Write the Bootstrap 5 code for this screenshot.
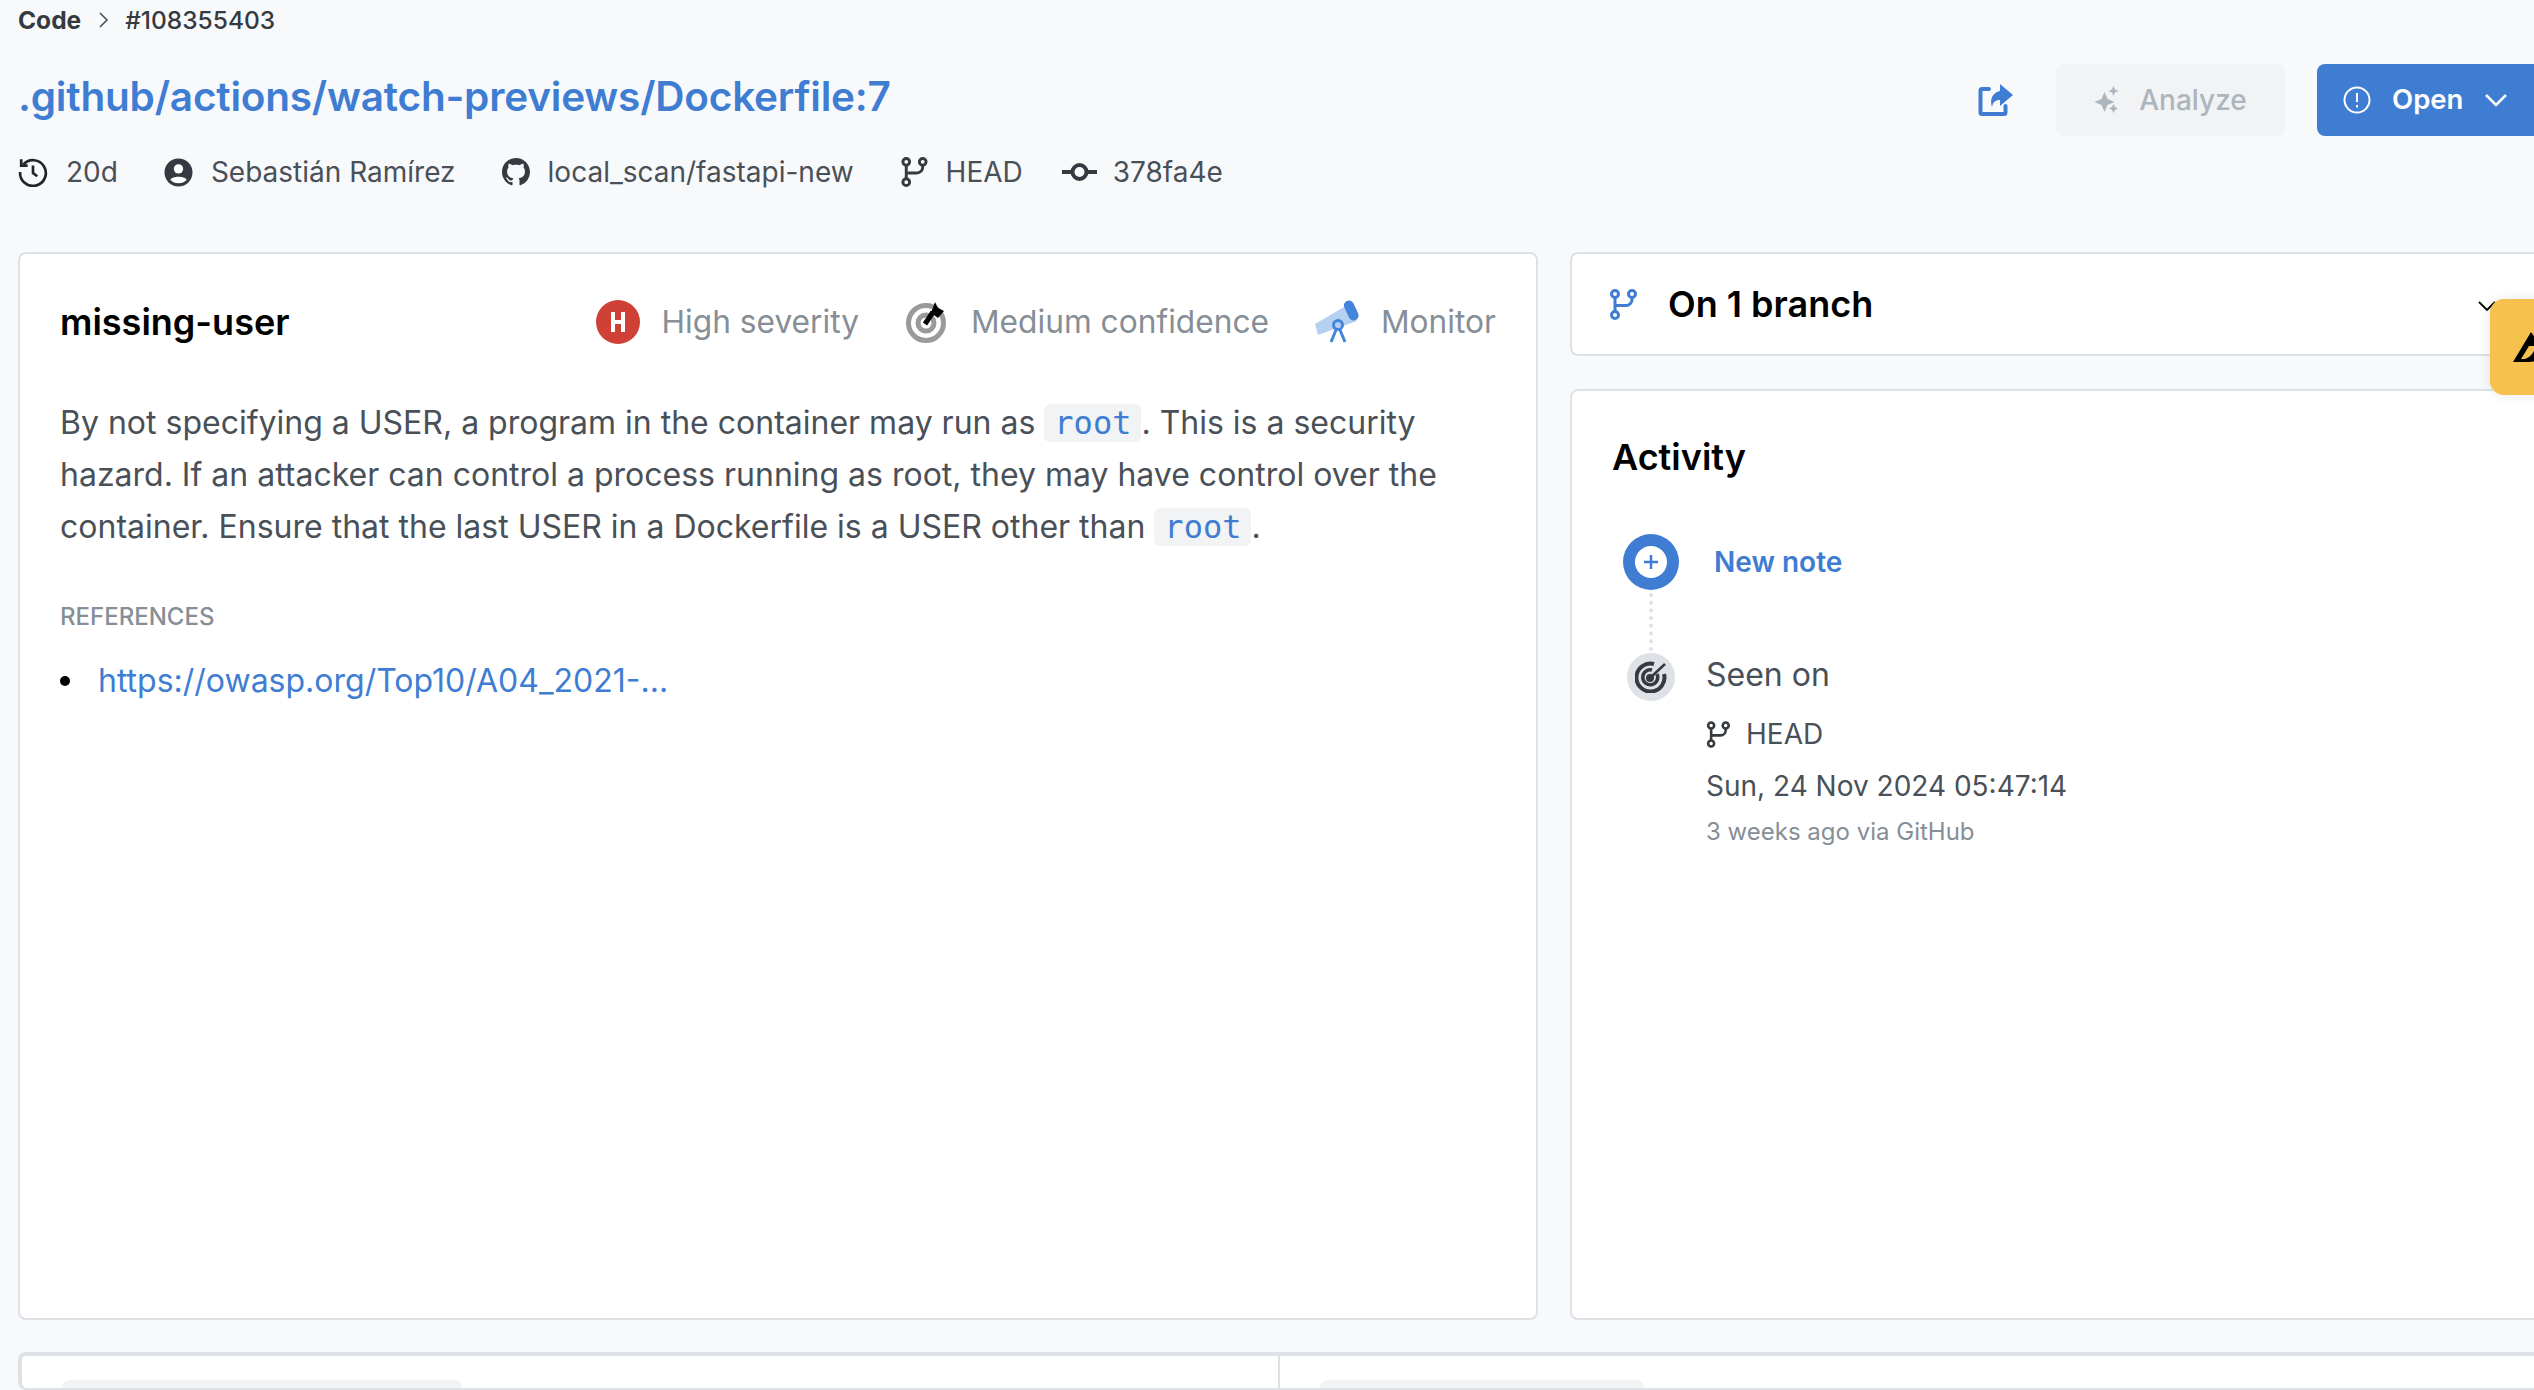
<!DOCTYPE html>
<html lang="en">
  <head>
    <meta charset="UTF-8" />
    <title>#108355403</title>
    <link href="https://cdn.jsdelivr.net/npm/bootstrap@5.3.0/dist/css/bootstrap.min.css" rel="stylesheet" />
    <style>
      html, body {
        height: 1390px;
        overflow: hidden;
      }
      body {
        background: #f8f9fb;
        font-family: Inter, "Liberation Sans", sans-serif;
        color: #495057;
        font-size: 28px;
        width: 2534px;
      }
      .page-wrap {
        width: 2560px;
        padding-left: 18px;
      }
      .crumbs {
        height: 40px;
        font-size: 24.500px;
        color: #343a40;
        font-weight: 500;
      }
      .crumbs b {
        font-weight: 700;
      }
      .crumb-sep {
        margin: 0 16px 0 18px;
      }
      .title-row {
        height: 72px;
        margin-top: 24px;
        width: 2531px;
      }
      .title-link {
        color: #3f7dd3;
        font-size: 40.500px;
        font-weight: 600;
        letter-spacing: -0.2px;
        text-decoration: none;
        margin-bottom: 6px;
      }
      .share-icon {
        margin-right: 43px;
      }
      .btn-analyze {
        width: 229px;
        height: 72px;
        background: #f1f3f5;
        color: #adb5bd;
        border: 0;
        border-radius: 8px;
        font-size: 28px;
        font-weight: 500;
        margin-right: 32px;
        gap: 20px;
      }
      .btn-open {
        width: 232px;
        height: 72px;
        background: #3f7dd3;
        color: #fff;
        border: 0;
        border-radius: 8px 0 0 8px;
        font-size: 27.500px;
        font-weight: 600;
        padding: 0 0 0 26px;
        gap: 21px;
      }
      .meta-row {
        height: 40px;
        margin-top: 16px;
        gap: 46px;
        font-size: 28px;
        color: #495057;
      }
      .meta-item {
        gap: 18px;
      }
      .meta-item:last-child {
        gap: 16px;
        margin-left: -7px;
      }
      .panels {
        margin-top: 60px;
        gap: 32px;
      }
      .panel {
        background: #fff;
        border: 2px solid #dee2e6;
        border-radius: 8px;
      }
      .panel-left {
        width: 1520px;
        height: 1068px;
        padding: 41px 40px 40px;
      }
      .panel-right {
        width: 990px;
        gap: 33px;
      }
      .branch-box {
        height: 104px;
        padding: 0 37px;
        gap: 31px;
      }
      .branch-box span {
        font-size: 36px;
        font-weight: 600;
        color: #000;
      }
      .branch-arrow {
        margin: 4px 25px 0 auto;
      }
      .activity-box {
        height: 931px;
        padding: 39px 40px;
      }
      .rule-name {
        font-size: 36px;
        font-weight: 600;
        color: #000;
      }
      .rule-tags {
        gap: 46px;
        color: #868e96;
        font-size: 31.700px;
      }
      .rule-tag {
        gap: 22px;
      }
      .rule-text {
        margin: 48px 0 0;
        font-size: 32px;
        line-height: 52px;
      }
      .code-chip {
        font-family: "DejaVu Sans Mono", monospace;
        font-size: 32px;
        line-height: 36px;
        color: #3f7dd3;
        background: #f1f3f5;
        padding: 0 10px;
        border-radius: 6px;
      }
      .refs-label {
        margin-top: 46px;
        font-size: 24px;
        font-weight: 500;
        color: #868e96;
      }
      .refs-list {
        margin: 22px 0 0;
        padding: 0;
        list-style: none;
        font-size: 32px;
      }
      .refs-list li::before {
        content: "";
        display: inline-block;
        width: 10px;
        height: 10px;
        border-radius: 50%;
        background: #000;
        margin: 0 28px 5px 0;
        vertical-align: middle;
      }
      .refs-list a {
        color: #3f7dd3;
        text-decoration: none;
      }
      .activity-title {
        font-size: 36px;
        font-weight: 600;
        color: #000;
      }
      .tl {
        margin: 50px 0 0 11px;
        position: relative;
      }
      .tl-line {
        position: absolute;
        left: 26px;
        top: 59px;
        height: 58px;
        border-left: 4px dotted #dee2e6;
      }
      .note-row {
        height: 56px;
        gap: 35px;
      }
      .note-row a {
        font-size: 28px;
        font-weight: 600;
        color: #3f7dd3;
        text-decoration: none;
      }
      .seen-row {
        margin: 63px 0 0 4px;
        gap: 31px;
      }
      .seen-icon {
        width: 48px;
        height: 48px;
        background: #dee2e6;
        border-radius: 50%;
      }
      .seen-title {
        font-size: 32px;
        line-height: 44px;
      }
      .seen-head {
        font-size: 28px;
        line-height: 28px;
        margin-top: 23px;
        gap: 16px;
      }
      .seen-date {
        font-size: 28px;
        line-height: 34px;
        margin-top: 21px;
      }
      .seen-via {
        font-size: 24px;
        line-height: 30px;
        color: #868e96;
        margin-top: 14px;
      }
      .lower-box {
        margin-top: 32px;
        height: 38px;
        width: 2530px;
        overflow: hidden;
        border-width: 4px 2px 2px 4px;
      }
      .lower-cell {
        padding: 24px 0 0 40px;
        width: 1256px;
      }
      .lower-cell + .lower-cell {
        width: auto;
        border-left: 2px solid #dee2e6;
      }
      .lower-tabs {
        height: 40px;
        background: #f1f3f5;
        border-radius: 8px 8px 0 0;
        padding: 8px 8px 0 10px;
      }
      .lower-tabs i {
        display: block;
        height: 30px;
        background: #fff;
        border-radius: 6px 6px 0 0;
      }
      .tabs-a {
        width: 400px;
      }
      .tabs-a i {
        width: 175px;
      }
      .tabs-b {
        width: 324px;
        padding-left: 8px;
      }
      .tabs-b i {
        width: 305px;
      }
      .side-tab {
        position: absolute;
        left: 2490px;
        top: 299px;
        width: 60px;
        height: 96px;
        background: #f6c24d;
        border-radius: 14px 0 0 14px;
        box-shadow: 0 0 12px rgba(0, 0, 0, 0.1);
        padding: 33px 0 0 23px;
      }
      .side-tab svg {
        display: block;
      }
    </style>
  </head>
  <body>
    <div class="page-wrap">
      <div class="crumbs d-flex align-items-center">
        <b>Code</b>
        <svg class="crumb-sep" width="10" height="16" viewBox="0 0 10 16" fill="none" stroke="#495057" stroke-width="1.600"><path d="M1 1l7 7-7 7" /></svg>
        <span>#108355403</span>
      </div>

      <div class="title-row d-flex align-items-center">
        <a class="title-link me-auto" href="#">.github/actions/watch-previews/Dockerfile:7</a>
        <svg class="share-icon" width="36" height="32" viewBox="0 0 36 32">
          <path d="M12 5H5a1.500 1.500 0 0 0-1.500 1.500v22A1.500 1.500 0 0 0 5 30h22a1.500 1.500 0 0 0 1.500-1.500V22" fill="none" stroke="#3f7dd3" stroke-width="4" stroke-linecap="round" />
          <path d="M23 0l13 11-13 11v-6c-5 0-7 2-8 7-3-9 2-15 8-16z" fill="#3f7dd3" />
        </svg>
        <button class="btn-analyze d-flex align-items-center justify-content-center">
          <svg width="25" height="28" viewBox="0 0 24 28" fill="#adb5bd">
            <path d="M10 6l3 7 7 3-7 3-3 7-3-7-7-3 7-3z" />
            <path d="M19 0l1.500 3.500 3.500 1.500-3.500 1.500-1.500 3.500-1.500-3.500-3.500-1.500 3.500-1.500z" />
            <path d="M19 18l1.500 3 3 1.500-3 1.500-1.500 3-1.500-3-3-1.500 3-1.500z" />
          </svg>
          Analyze
        </button>
        <button class="btn-open d-flex align-items-center">
          <svg width="28" height="28" viewBox="0 0 28 28" fill="none" stroke="#fff" stroke-width="2">
            <circle cx="14" cy="14" r="12.500" />
            <path d="M14 7v9M14 19v2.500" />
          </svg>
          Open
          <svg width="24" height="14" viewBox="0 0 24 14" fill="none" stroke="#fff" stroke-width="2.500"><path d="M2 2l10 10L22 2" /></svg>
        </button>
      </div>

      <div class="meta-row d-flex align-items-center">
        <div class="meta-item d-flex align-items-center">
          <svg width="30" height="30" viewBox="0 0 28 28" fill="none" stroke="#212529" stroke-width="2.500"><path d="M5 7a12 12 0 1 1-3 7" /><path d="M3 2v6h6" /><path d="M14 8v7l4 3" /></svg>
          <span>20d</span>
        </div>
        <div class="meta-item d-flex align-items-center">
          <svg width="29" height="29" viewBox="0 0 28 28"><circle cx="14" cy="14" r="13.500" fill="#343a40" /><circle cx="14" cy="10.500" r="4.500" fill="#fff" /><path d="M6 21c2-4 14-4 16 0a11 11 0 0 1-16 0z" fill="#fff" /></svg>
          <span>Sebastián Ramírez</span>
        </div>
        <div class="meta-item d-flex align-items-center">
          <svg width="28" height="28" viewBox="0 0 16 16" fill="#343a40"><path d="M8 0C3.580 0 0 3.580 0 8c0 3.540 2.290 6.530 5.470 7.590.4.070.55-.17.55-.38 0-.19-.01-.82-.01-1.490-2.010.370-2.530-.49-2.690-.94-.09-.23-.48-.94-.82-1.130-.28-.15-.68-.52-.01-.53.630-.01 1.080.58 1.230.82.720 1.210 1.870.870 2.330.660.070-.52.280-.87.510-1.070-1.780-.2-3.640-.89-3.640-3.950 0-.87.310-1.590.820-2.150-.08-.2-.36-1.020.08-2.120 0 0 .67-.21 2.200.820.640-.18 1.320-.27 2-.27s1.360.09 2 .27c1.530-1.040 2.200-.82 2.200-.82.440 1.100.16 1.920.08 2.120.51.560.82 1.270.82 2.150 0 3.070-1.870 3.750-3.650 3.950.29.250.54.730.54 1.480 0 1.070-.01 1.930-.01 2.200 0 .21.150.46.550.38A8.010 8.010 0 0 0 16 8c0-4.420-3.580-8-8-8z" /></svg>
          <span>local_scan/fastapi-new</span>
        </div>
        <div class="meta-item d-flex align-items-center">
          <svg width="28" height="30" viewBox="0 0 28 31" fill="none" stroke="#343a40" stroke-width="3"><circle cx="6" cy="5" r="3.500" /><circle cx="6" cy="26" r="3.500" /><circle cx="23" cy="5" r="3.500" /><path d="M6 8.500v14M23 8.500v2a6 6 0 0 1-6 6H6" /></svg>
          <span>HEAD</span>
        </div>
        <div class="meta-item d-flex align-items-center">
          <svg width="35" height="22" viewBox="0 0 35 22" fill="none" stroke="#343a40" stroke-width="4"><circle cx="17.500" cy="11" r="7" /><path d="M0 11h10M25 11h10" /></svg>
          <span>378fa4e</span>
        </div>
      </div>

      <div class="panels d-flex align-items-start">
        <div class="panel panel-left">
          <div class="d-flex align-items-center">
            <span class="rule-name me-auto">missing-user</span>
            <div class="rule-tags d-flex align-items-center">
              <div class="rule-tag d-flex align-items-center">
                <svg width="44" height="44" viewBox="0 0 44 44"><circle cx="22" cy="22" r="22" fill="#cf4037" /><path d="M15 12h4v8h6v-8h4v20h-4v-8h-6v8h-4z" fill="#fff" /></svg>
                <span>High severity</span>
              </div>
              <div class="rule-tag d-flex align-items-center">
                <svg width="44" height="44" viewBox="0 0 44 44" fill="none"><circle cx="21" cy="23" r="17.500" stroke="#9a9a9a" stroke-width="5" /><circle cx="21" cy="23" r="8" stroke="#9a9a9a" stroke-width="5" /><path d="M20 24l8-12" stroke="#000" stroke-width="5" /><path d="M26 13l4-11 3 6 6 3-6 7z" fill="#000" /></svg>
                <span>Medium confidence</span>
              </div>
              <div class="rule-tag d-flex align-items-center">
                <svg width="44" height="44" viewBox="0 0 44 44"><path d="M0 24L29 7l13 14L3 35z" fill="#b6d0f2" /><rect x="31" y="0" width="10" height="21" rx="5" transform="rotate(-25 36 10)" fill="#4285db" /><circle cx="23" cy="25" r="4.500" fill="none" stroke="#4285db" stroke-width="3" /><path d="M21 30l-5 12M25 30l5 12" stroke="#4285db" stroke-width="3" /></svg>
                <span>Monitor</span>
              </div>
            </div>
          </div>
          <p class="rule-text">
            By not specifying a USER, a program in the container may run as <code class="code-chip">root</code>. This is a security hazard. If an attacker can control a process running as root, they may have control over the container. Ensure that the last USER in a Dockerfile is a USER other than <code class="code-chip">root</code>.
          </p>
          <div class="refs-label">REFERENCES</div>
          <ul class="refs-list">
            <li><a href="#">https://owasp.org/Top10/A04_2021-...</a></li>
          </ul>
        </div>

        <div class="panel-right d-flex flex-column">
          <div class="panel branch-box d-flex align-items-center">
            <svg width="28" height="31" viewBox="0 0 28 31" fill="none" stroke="#3f7dd3" stroke-width="3"><circle cx="6" cy="5" r="3.500" /><circle cx="6" cy="26" r="3.500" /><circle cx="23" cy="5" r="3.500" /><path d="M6 8.500v14M23 8.500v2a6 6 0 0 1-6 6H6" /></svg>
            <span>On 1 branch</span>
            <svg class="branch-arrow" width="18" height="11" viewBox="0 0 18 11" fill="none" stroke="#000" stroke-width="1.800"><path d="M1 1l8 8 8-8" /></svg>
          </div>
          <div class="panel activity-box">
            <div class="activity-title">Activity</div>
            <div class="tl">
              <div class="tl-line"></div>
              <div class="note-row d-flex align-items-center">
                <svg width="56" height="56" viewBox="0 0 56 56"><circle cx="28" cy="28" r="28" fill="#3f7dd3" /><circle cx="28" cy="28" r="16" fill="#fff" /><path d="M28 21v14M21 28h14" stroke="#3f7dd3" stroke-width="2.500" /></svg>
                <a href="#">New note</a>
              </div>
              <div class="seen-row d-flex">
                <div class="seen-icon d-flex align-items-center justify-content-center">
                  <svg width="32" height="32" viewBox="0 0 32 32" fill="none" stroke="#343a40" stroke-width="4"><path d="M29 13a14 14 0 1 1-10-10" /><path d="M22 13a7.500 7.500 0 1 1-5-4" stroke-width="3.500" /><circle cx="15" cy="17" r="2" /><path d="M15 17L30 3" stroke-width="2.500" /></svg>
                </div>
                <div>
                  <div class="seen-title">Seen on</div>
                  <div class="seen-head d-flex align-items-center">
                    <svg width="24" height="27" viewBox="0 0 28 31" fill="none" stroke="#343a40" stroke-width="3"><circle cx="6" cy="5" r="3.500" /><circle cx="6" cy="26" r="3.500" /><circle cx="23" cy="5" r="3.500" /><path d="M6 8.500v14M23 8.500v2a6 6 0 0 1-6 6H6" /></svg>
                    <span>HEAD</span>
                  </div>
                  <div class="seen-date">Sun, 24 Nov 2024 05:47:14</div>
                  <div class="seen-via">3 weeks ago via GitHub</div>
                </div>
              </div>
            </div>
          </div>
        </div>
      </div>

      <div class="panel lower-box d-flex">
        <div class="lower-cell">
          <div class="lower-tabs tabs-a"><i></i></div>
        </div>
        <div class="lower-cell">
          <div class="lower-tabs tabs-b"><i></i></div>
        </div>
      </div>
    </div>

    <div class="side-tab">
      <svg width="34" height="30" viewBox="0 0 34 30"><path d="M0 30L18 0l16 22-10 6q-3 2-8 2z" fill="#000" /><path d="M8 27l8-13h6q-1 10-10 13z" fill="#f6c24d" /></svg>
    </div>

    <script src="https://cdn.jsdelivr.net/npm/bootstrap@5.3.0/dist/js/bootstrap.bundle.min.js"></script>
  </body>
</html>
